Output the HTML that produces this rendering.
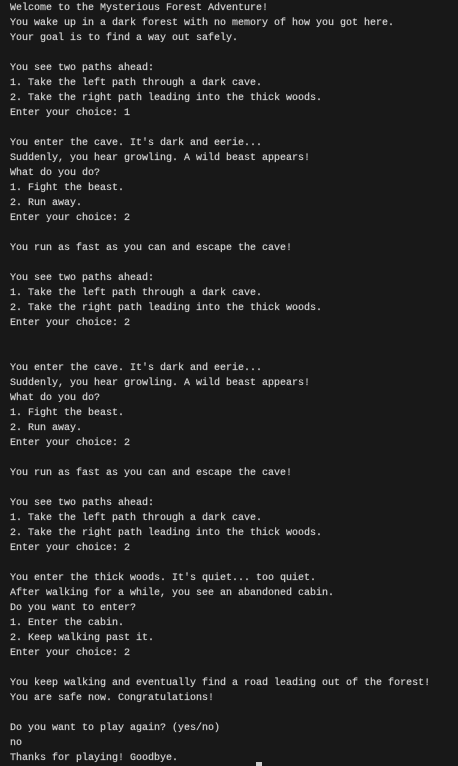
<!DOCTYPE html>
<html><head><meta charset="utf-8"><style>
html,body{margin:0;padding:0;background:#181818;width:458px;height:766px;overflow:hidden}
pre{margin:0;position:absolute;left:10px;top:1px;font-family:"Liberation Mono",monospace;font-size:10px;line-height:15px;color:#d0d0d0;white-space:pre;-webkit-text-stroke:0.2px #d0d0d0}
.cur{position:absolute;left:256px;top:762px;width:6px;height:4px;background:#cccccc}
</style></head><body>
<pre>Welcome to the Mysterious Forest Adventure!
You wake up in a dark forest with no memory of how you got here.
Your goal is to find a way out safely.

You see two paths ahead:
1. Take the left path through a dark cave.
2. Take the right path leading into the thick woods.
Enter your choice: 1

You enter the cave. It's dark and eerie...
Suddenly, you hear growling. A wild beast appears!
What do you do?
1. Fight the beast.
2. Run away.
Enter your choice: 2

You run as fast as you can and escape the cave!

You see two paths ahead:
1. Take the left path through a dark cave.
2. Take the right path leading into the thick woods.
Enter your choice: 2


You enter the cave. It's dark and eerie...
Suddenly, you hear growling. A wild beast appears!
What do you do?
1. Fight the beast.
2. Run away.
Enter your choice: 2

You run as fast as you can and escape the cave!

You see two paths ahead:
1. Take the left path through a dark cave.
2. Take the right path leading into the thick woods.
Enter your choice: 2

You enter the thick woods. It's quiet... too quiet.
After walking for a while, you see an abandoned cabin.
Do you want to enter?
1. Enter the cabin.
2. Keep walking past it.
Enter your choice: 2

You keep walking and eventually find a road leading out of the forest!
You are safe now. Congratulations!

Do you want to play again? (yes/no)
no
Thanks for playing! Goodbye.</pre>
<div class="cur"></div>
</body></html>
